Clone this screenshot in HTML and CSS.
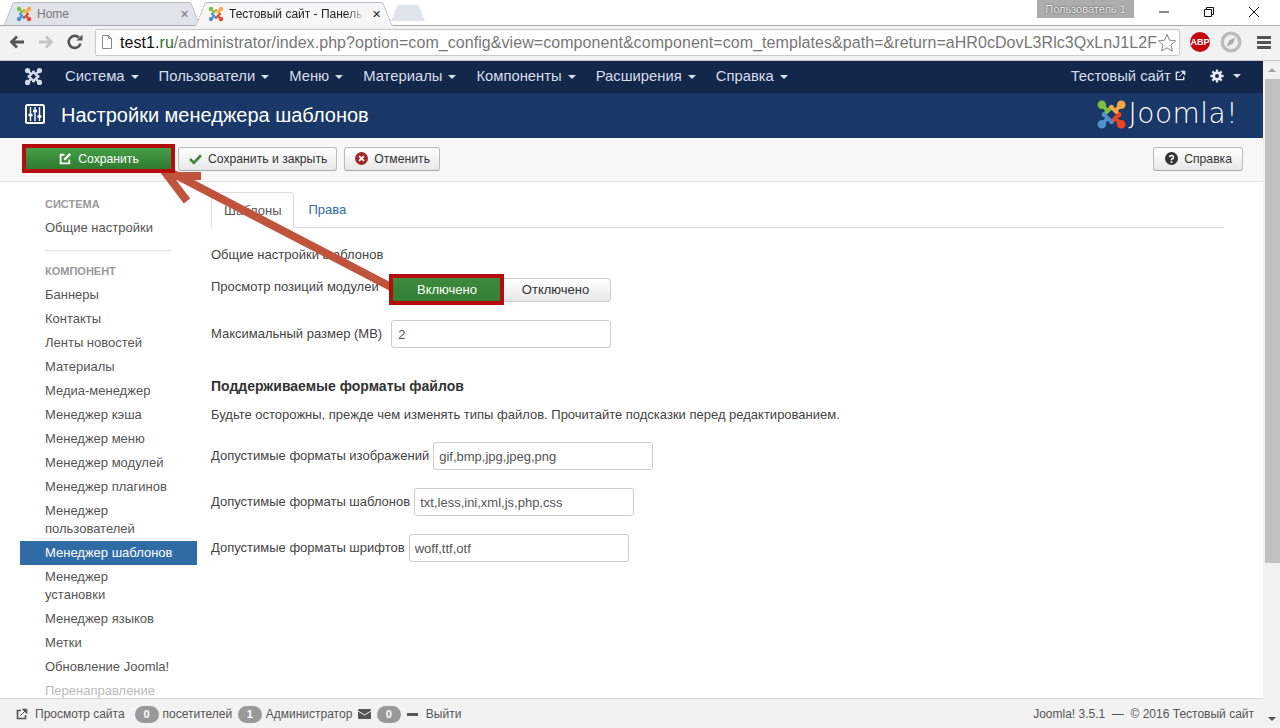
FILE: index.html
```html
<!DOCTYPE html>
<html lang="ru">
<head>
<meta charset="utf-8">
<title>Настройки менеджера шаблонов</title>
<link rel="stylesheet" href="styles.css">
</head>
<body>
<svg width="0" height="0" class="defs"><defs>
<g id="jpiece" fill="none" stroke-width="4" stroke-linecap="round"><path d="M6 6l6 6M8 16.500 16.500 8"/><circle cx="6" cy="6" r="4.400" stroke="none" fill="currentColor"/></g>
<g id="jlogo">
  <use href="#jpiece" stroke="#7ac143" color="#7ac143"/>
  <use href="#jpiece" stroke="#f9a541" color="#f9a541" transform="rotate(90 16 16)"/>
  <use href="#jpiece" stroke="#f44321" color="#f44321" transform="rotate(180 16 16)"/>
  <use href="#jpiece" stroke="#5091cd" color="#5091cd" transform="rotate(270 16 16)"/>
</g>
<g id="jmono">
  <use href="#jpiece" stroke="#d5dbe6" color="#d5dbe6"/>
  <use href="#jpiece" stroke="#d5dbe6" color="#d5dbe6" transform="rotate(90 16 16)"/>
  <use href="#jpiece" stroke="#d5dbe6" color="#d5dbe6" transform="rotate(180 16 16)"/>
  <use href="#jpiece" stroke="#d5dbe6" color="#d5dbe6" transform="rotate(270 16 16)"/>
</g>
</defs></svg>

<div class="tabstrip">
  <div class="tab"><svg class="favicon" viewBox="0 0 32 32"><use href="#jlogo"/></svg><span class="tab-title">Home</span><span class="tab-x">✕</span></div>
  <div class="tab tab-active"><svg class="favicon" viewBox="0 0 32 32"><use href="#jlogo"/></svg><span class="tab-title tab-fade">Тестовый сайт - Панель у</span><span class="tab-x">✕</span></div>
  <div class="tab tab-new"></div>
  <div class="profile">Пользователь 1</div>
  <div class="winctl">
    <svg viewBox="0 0 12 12"><path d="M1 6h10" stroke="#111" fill="none"/></svg>
    <svg viewBox="0 0 12 12"><path d="M1.500 3.500h7v7h-7zM3.500 3.500v-2h7v7h-2" stroke="#111" fill="none"/></svg>
    <svg viewBox="0 0 12 12"><path d="M1 1l10 10M11 1L1 11" stroke="#111" fill="none"/></svg>
  </div>
</div>

<div class="addressbar">
  <svg class="nav-ic" viewBox="0 0 18 18"><path d="M16 9H4M9 3.500 3.500 9 9 14.500" fill="none" stroke="#555" stroke-width="2.800"/></svg>
  <svg class="nav-ic" viewBox="0 0 18 18"><path d="M2 9h12M9 3.500 14.500 9 9 14.500" fill="none" stroke="#c4c4c4" stroke-width="2.800"/></svg>
  <svg class="nav-ic" viewBox="0 0 18 18"><path d="M14.500 10.500A6 6 0 1 1 13 4.700" fill="none" stroke="#555" stroke-width="2.600"/><path d="M10.500 7.500h6v-6z" fill="#555"/></svg>
  <div class="omnibox">
    <svg class="page-ic" viewBox="0 0 12 14"><path d="M1.500.5h6l3 3v10h-9zM7.500.5v3h3" fill="#fff" stroke="#888"/></svg>
    <span class="url"><span class="url-host">test1.<span class="url-tld">ru</span></span>/administrator/index.php?option=com_config&amp;view=component&amp;component=com_templates&amp;path=&amp;return=aHR0cDovL3Rlc3QxLnJ1L2F</span>
    <svg class="star" viewBox="0 0 20 20"><path d="M10 1.500l2.500 5.700 6.200.6-4.700 4.100 1.400 6.100L10 14.900l-5.400 3.100 1.400-6.100L1.300 7.800l6.200-.6z" fill="none" stroke="#888"/></svg>
  </div>
  <span class="abp">ABP</span>
  <svg class="compass" viewBox="0 0 20 20"><circle cx="10" cy="10" r="8" fill="#eee" stroke="#bbb" stroke-width="3"/><path d="M14 6l-5.500 2.500L6 14l5.500-2.500z" fill="#aaa"/></svg>
  <div class="burger"><i></i><i></i><i></i></div>
</div>

<div class="viewport">
  <div class="page">
    <nav class="navbar">
      <svg class="nav-logo" viewBox="0 0 32 32"><use href="#jmono"/></svg>
      <ul class="menu">
        <li>Система<b class="caret"></b></li>
        <li>Пользователи<b class="caret"></b></li>
        <li>Меню<b class="caret"></b></li>
        <li>Материалы<b class="caret"></b></li>
        <li>Компоненты<b class="caret"></b></li>
        <li>Расширения<b class="caret"></b></li>
        <li>Справка<b class="caret"></b></li>
      </ul>
      <div class="nav-right">
        <span class="site-link">Тестовый сайт <svg class="ext" viewBox="0 0 12 12"><path d="M9.500 7v3.500h-8v-8H5" fill="none" stroke="currentColor" stroke-width="1.600"/><path d="M4.500 7.500 10 2M6.500 1.200h4.300v4.300z" fill="currentColor" stroke="currentColor"/></svg></span>
        <svg class="gear" viewBox="0 0 16 16"><path d="M8 .5v15M.5 8h15M2.700 2.700l10.600 10.600M13.300 2.700 2.700 13.300" stroke="#e8ecf3" stroke-width="2.600"/><circle cx="8" cy="8" r="5.200" fill="#e8ecf3"/><circle cx="8" cy="8" r="2.200" fill="#12274a"/></svg>
        <b class="caret"></b>
      </div>
    </nav>

    <header class="subhead">
      <svg class="title-ic" viewBox="0 0 20 20"><rect x="1" y="1" width="18" height="18" rx="1.500" fill="none" stroke="#fff" stroke-width="2"/><path d="M5.500 3v14M10 3v14M14.500 3v14" stroke="#fff" stroke-width="1.400"/><path d="M3.500 11h4M8 7h4M12.500 12.500h4" stroke="#fff" stroke-width="2.600"/></svg>
      <h1 class="page-title">Настройки менеджера шаблонов</h1>
      <div class="brand"><svg class="brand-ic" viewBox="0 0 32 32"><use href="#jlogo"/></svg><span class="brand-name">Joomla!</span></div>
    </header>

    <div class="toolbar">
      <button class="btn btn-save"><svg class="ic" viewBox="0 0 12 12"><path d="M9.500 7v3.500h-8v-8H5" fill="none" stroke="currentColor" stroke-width="1.700"/><path d="M4.500 7.500V6l5-5 1.500 1.500-5 5z" fill="currentColor"/></svg>Сохранить</button>
      <button class="btn"><svg class="ic" viewBox="0 0 12 12"><path d="M1 6.500l3.500 3.500L11 3" fill="none" stroke="#3d8a3a" stroke-width="2.500"/></svg>Сохранить и закрыть</button>
      <button class="btn"><svg class="ic" viewBox="0 0 12 12"><circle cx="6" cy="6" r="6" fill="#a12a2a"/><path d="M3.800 3.800l4.400 4.400M8.200 3.800 3.800 8.200" stroke="#fff" stroke-width="1.600"/></svg>Отменить</button>
      <button class="btn btn-help"><svg class="ic" viewBox="0 0 12 12"><circle cx="6" cy="6" r="6" fill="#333"/><path d="M4.200 4.700A1.800 1.700 0 1 1 6 6.600v1" fill="none" stroke="#fff" stroke-width="1.400"/><path d="M5.200 8.500h1.600v1.500H5.200z" fill="#fff"/></svg>Справка</button>
    </div>

    <div class="main">
      <aside class="sidebar">
        <div class="side-head">Система</div>
        <a class="side-link">Общие настройки</a>
        <hr class="side-rule">
        <div class="side-head">Компонент</div>
        <a class="side-link">Баннеры</a>
        <a class="side-link">Контакты</a>
        <a class="side-link">Ленты новостей</a>
        <a class="side-link">Материалы</a>
        <a class="side-link">Медиа-менеджер</a>
        <a class="side-link">Менеджер кэша</a>
        <a class="side-link">Менеджер меню</a>
        <a class="side-link">Менеджер модулей</a>
        <a class="side-link">Менеджер плагинов</a>
        <a class="side-link">Менеджер пользователей</a>
        <a class="side-link side-active">Менеджер шаблонов</a>
        <a class="side-link">Менеджер<br>установки</a>
        <a class="side-link">Менеджер языков</a>
        <a class="side-link">Метки</a>
        <a class="side-link">Обновление Joomla!</a>
        <a class="side-link side-muted">Перенаправление</a>
      </aside>
      <section class="content">
        <div class="tabs">
          <span class="ctab ctab-active">Шаблоны</span>
          <span class="ctab">Права</span>
        </div>
        <p class="legend">Общие настройки шаблонов</p>
        <div class="row row-toggle">
          <label class="lbl">Просмотр позиций модулей</label>
          <div class="toggle"><span class="tg tg-on">Включено</span><span class="tg tg-off">Отключено</span></div>
        </div>
        <div class="row row-size">
          <label class="lbl">Максимальный размер (MB)</label>
          <input class="field" value="2">
        </div>
        <h3 class="section-title">Поддерживаемые форматы файлов</h3>
        <p class="section-note">Будьте осторожны, прежде чем изменять типы файлов. Прочитайте подсказки перед редактированием.</p>
        <div class="row row-fmt">
          <label class="lbl">Допустимые форматы изображений</label>
          <input class="field" value="gif,bmp,jpg,jpeg,png">
        </div>
        <div class="row row-fmt">
          <label class="lbl">Допустимые форматы шаблонов</label>
          <input class="field" value="txt,less,ini,xml,js,php,css">
        </div>
        <div class="row row-fmt">
          <label class="lbl">Допустимые форматы шрифтов</label>
          <input class="field" value="woff,ttf,otf">
        </div>
      </section>
    </div>

    <footer class="status">
      <svg class="ic ic-foot" viewBox="0 0 12 12"><path d="M9.500 7v3.500h-8v-8H5" fill="none" stroke="currentColor" stroke-width="1.600"/><path d="M4.500 7.500 10 2M6.500 1.200h4.300v4.300z" fill="currentColor" stroke="currentColor"/></svg>
      <span class="st-view">Просмотр сайта</span>
      <span class="badge">0</span><span class="st-t">посетителей</span>
      <span class="badge">1</span><span class="st-t">Администратор</span>
      <svg class="mail" viewBox="0 0 13 10"><rect width="13" height="10" rx="1" fill="#555"/><path d="M0 2l6.500 4L13 2" fill="none" stroke="#eee"/></svg>
      <span class="badge">0</span>
      <span class="minus"></span><span class="st-out">Выйти</span>
      <span class="copy">Joomla! 3.5.1 &nbsp;—&nbsp; © 2016 Тестовый сайт</span>
    </footer>
  </div>
  <div class="scrollbar">
    <span class="sb-up"></span>
    <span class="sb-thumb"></span>
    <span class="sb-down"></span>
  </div>
</div>

<svg class="annot" viewBox="0 0 1280 728" width="1280" height="728">
  <path class="arrow" d="M391 287 172 173M201 176H168L187 201"/>
  <rect class="hl" x="24" y="146" width="149" height="25"/>
  <rect class="hl" x="391" y="276" width="111" height="27"/>
</svg>
</body>
</html>
```
FILE: styles.css
```css
* { box-sizing: border-box; }
html, body { margin: 0; height: 728px; overflow: hidden; }
body { position: relative; display: flex; flex-direction: column; background: #fff; color: #333; font: 13px/18px "Liberation Sans", Arial, sans-serif; }
.defs { position: absolute; }

/* browser chrome */
.tabstrip { height: 26px; flex: none; display: flex; align-items: flex-end; padding-left: 8px; gap: 4px; background: #fff; border-bottom: 1px solid #a9abb0; position: relative; }
.tab { width: 188px; height: 24px; position: relative; display: flex; align-items: center; padding: 0 7px 0 8px; color: #777; z-index: 0; margin-bottom: -1px; }
.tab::before, .tab::after { content: ""; position: absolute; top: 0; bottom: 0; width: 60%; background: #dfe3ea; border: 1px solid #b5b8bd; border-bottom: 1px solid #a9abb0; z-index: -1; }
.tab::before { left: 0; border-right: 0; border-radius: 3px 0 0 0; transform: skewX(-22deg); }
.tab::after { right: 0; border-left: 0; border-radius: 0 3px 0 0; transform: skewX(22deg); }
.tab-active { color: #222; }
.tab-active::before, .tab-active::after { background: #f6f6f6; border-bottom-color: #f6f6f6; }
.tab-new { width: 28px; height: 16px; margin: 0 0 4px 2px; }
.tab-new::before, .tab-new::after { border-color: #dfe3ea; }
.favicon { width: 16px; height: 16px; flex: none; margin-right: 5px; }
.tab-title { flex: 1; white-space: nowrap; overflow: hidden; font-size: 12px; }
.tab-fade { -webkit-mask-image: linear-gradient(90deg, #000 85%, transparent); mask-image: linear-gradient(90deg, #000 85%, transparent); }
.tab-x { font-size: 11px; margin-left: 6px; }
.profile { position: absolute; left: 1037px; top: 0; width: 97px; height: 18px; background: #adadad; color: #eee; font-size: 11px; line-height: 18px; text-align: center; text-shadow: 0 0 2px #333; white-space: nowrap; }
.winctl { position: absolute; right: 20px; top: 6px; display: flex; gap: 33px; }
.winctl svg { width: 12px; height: 12px; }

.addressbar { height: 34px; flex: none; display: flex; align-items: center; padding: 0 6px 2px 8px; gap: 10px; background: #f2f2f2; }
.nav-ic { width: 18px; height: 18px; flex: none; margin-right: 1px; }
.omnibox { width: 1085px; height: 27px; background: #fff; border: 1px solid #c9c9c9; border-radius: 2px; display: flex; align-items: center; padding-left: 5px; position: relative; overflow: hidden; flex: none; }
.page-ic { width: 12px; height: 14px; flex: none; margin-right: 7px; }
.url { font-size: 16px; white-space: nowrap; color: #777; letter-spacing: .06px; padding-top: 2px; }
.url-host { color: #111; }
.url-tld { color: #2c6e2c; }
.star { position: absolute; right: 2px; top: 3px; width: 20px; height: 20px; }
.abp { width: 20px; height: 20px; flex: none; border-radius: 50%; background: #c4050c; color: #fff; font-size: 9px; font-weight: 700; line-height: 20px; text-align: center; }
.compass { width: 22px; height: 22px; flex: none; }
.burger { width: 14px; flex: none; display: flex; flex-direction: column; gap: 2px; margin-left: 5px; }
.burger i { display: block; height: 3px; background: #555; }

/* page */
.viewport { flex: 1; min-height: 0; display: flex; border-top: 1px solid #c8c8c8; }
.page { width: 1263px; flex: none; display: flex; flex-direction: column; }
.scrollbar { width: 17px; flex: none; background: #f1f1f1; display: flex; flex-direction: column; align-items: center; }
.sb-up { width: 0; height: 0; margin: 7px 0; border: 4px solid transparent; border-top: 0; border-bottom-color: #a3a3a3; }
.sb-thumb { width: 100%; height: 484px; background: #c1c1c1; margin-left: 3px; }
.sb-down { width: 0; height: 0; margin-top: auto; margin-bottom: 7px; border: 4px solid transparent; border-bottom: 0; border-top-color: #505050; }

.navbar { height: 32px; flex: none; background: #12274a; color: #d8deea; display: flex; align-items: center; font-size: 14.800px; padding: 0 0 2px 24px; }
.nav-logo { width: 19px; height: 19px; flex: none; margin-right: 22px; }
.menu { list-style: none; display: flex; gap: 20px; margin: 0; padding: 0; }
.menu li { white-space: nowrap; }
.caret { display: inline-block; width: 0; height: 0; border: 4px solid transparent; border-top-color: currentColor; border-bottom: 0; margin-left: 6px; vertical-align: 2px; }
.nav-right { margin-left: auto; display: flex; align-items: center; padding-right: 22px; }
.site-link { white-space: nowrap; margin-right: 24px; }
.ext { width: 11px; height: 11px; }
.gear { width: 14px; height: 14px; margin-right: 3px; }
.nav-right .caret { margin-left: 6px; }

.subhead { height: 45px; flex: none; background: #1a3867; color: #fff; display: flex; align-items: center; padding: 0 25px 2px 25px; }
.title-ic { width: 20px; height: 20px; flex: none; margin-right: 16px; margin-top: -2px; }
.page-title { margin: 0; font-size: 20px; font-weight: 400; line-height: 24px; }
.brand { margin-left: auto; display: flex; align-items: center; }
.brand-ic { width: 31px; height: 31px; margin-right: 2px; }
.brand-name { font: 200 28px/32px "DejaVu Sans", Lato, sans-serif; letter-spacing: .5px; margin-top: -2px; white-space: nowrap; }

.toolbar { height: 44px; flex: none; background: #f7f7f7; border-bottom: 1px solid #e1e1e1; display: flex; align-items: center; gap: 7px; padding: 0 20px 2px 26px; }
.btn { height: 24px; padding: 0 9px 0 10px; border: 1px solid #bbb; border-bottom-color: #a8a8a8; border-radius: 3px; background: linear-gradient(#fff, #e8e8e8); color: #333; font: 12.200px/22px "Liberation Sans", Arial, sans-serif; display: flex; align-items: center; white-space: nowrap; }
.ic { width: 13px; height: 13px; flex: none; margin-right: 6px; }
.btn-save { width: 145px; height: 21px; justify-content: center; border: 0; border-radius: 0; background: linear-gradient(#45a045, #2f7a32); color: #fff; }
.btn-help { margin-left: auto; padding: 0 10px 0 11px; }

.main { flex: 1; min-height: 0; display: flex; overflow: hidden; }
.sidebar { width: 197px; flex: none; padding: 13px 0 0 20px; }
.side-head { padding-left: 25px; margin-bottom: 3px; font-size: 11px; font-weight: 700; line-height: 18px; color: #999; text-transform: uppercase; }
.side-link { display: block; padding: 3px 20px 3px 25px; color: #555; }
.side-active { background: #2f6ca6; color: #fff; }
.side-muted { color: #bbb; }
.side-rule { margin: 10px 26px 11px 25px; border: 0; border-top: 1px solid #e5e5e5; }
.content { flex: 1; padding: 10px 39px 0 14px; color: #444; }
.tabs { height: 36px; display: flex; border-bottom: 1px solid #ddd; }
.ctab { height: 36px; padding: 0 15px; line-height: 35px; color: #2f6ca6; }
.ctab-active { padding: 0 11px 0 12px; color: #555; background: #fff; border: 1px solid #ddd; border-bottom-color: #fff; border-radius: 4px 4px 0 0; }
.legend { margin: 18px 0 0; }
.row { display: flex; }
.lbl { white-space: nowrap; }
.row-toggle { margin-top: 13px; align-items: flex-start; }
.row-toggle .lbl { width: 180px; margin-top: 1px; }
.toggle { display: flex; height: 24px; width: 220px; margin-top: 1px; }
.tg { text-align: center; line-height: 24px; font-size: 13px; }
.tg-on { width: 108px; margin-left: 2px; background: linear-gradient(#3d8a3d, #337f36); color: #fff; }
.tg-off { flex: 1; background: linear-gradient(#fff, #e8e8e8); border: 1px solid #ccc; border-left: 0; border-radius: 0 4px 4px 0; color: #333; line-height: 22px; }
.row-size { margin-top: 18px; align-items: center; gap: 9px; }
.row-size .lbl { padding-bottom: 1px; }
.field { width: 220px; height: 28px; padding: 0 6px; border: 1px solid #ccc; border-radius: 3px; background: #fff; color: #555; font: 13px "Liberation Sans", Arial, sans-serif; }
.row-fmt .field { padding-left: 5px; }
.section-title { margin: 29px 0 0; font-size: 14px; line-height: 18px; font-weight: 700; color: #333; }
.section-note { margin: 11px 0 0; }
.row-fmt { margin-top: 18px; align-items: center; gap: 4px; }

.status { height: 30px; flex: none; background: #f2f2f2; border-top: 1px solid #d8d8d8; display: flex; align-items: center; padding: 1px 9px 0 16px; font-size: 12px; color: #555; white-space: nowrap; }
.ic-foot { width: 12px; height: 12px; margin-right: 7px; }
.st-view { margin-right: 10px; }
.badge { width: 24px; height: 17px; border-radius: 9px; background: #999; color: #fff; font-weight: 700; font-size: 11px; line-height: 17px; text-align: center; flex: none; }
.st-t { margin: 0 5.500px 0 4px; }
.mail { width: 13px; height: 10px; margin: 0 6px 0 0; flex: none; }
.minus { width: 11px; height: 3px; background: #555; margin: 0 8px 0 6px; }
.copy { margin-left: auto; }

/* annotation */
.annot { position: absolute; left: 0; top: 0; pointer-events: none; }
.hl { fill: none; stroke: #b50d0d; stroke-width: 4; }
.arrow { fill: none; stroke: #c0533c; stroke-width: 8; }
```
